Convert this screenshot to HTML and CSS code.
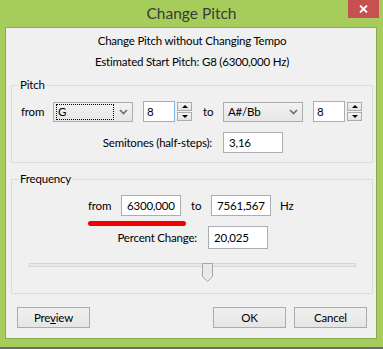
FILE: index.html
```html
<!DOCTYPE html>
<html lang="en">
<head>
<meta charset="utf-8">
<title>Change Pitch</title>
<link rel="stylesheet" href="styles.css">
</head>
<body>
<div class="window">
  <div class="titlebar">
    <h1 class="title">Change Pitch</h1>
    <div class="close"><svg width="9" height="8" viewBox="0 0 9 8"><path d="M1 0.5 L8 7.5 M8 0.5 L1 7.5" stroke="#fff" stroke-width="1.8" fill="none"/></svg></div>
  </div>
  <div class="client">
    <p class="caption">Change Pitch without Changing Tempo</p>
    <p class="caption second">Estimated Start Pitch: G8 (6300,000 Hz)</p>

    <fieldset class="group pitch">
      <legend>Pitch</legend>
      <div class="row row-notes">
        <span class="lbl lbl-from">from</span>
        <div class="combo">
          <span class="combo-val focus">G</span>
          <svg class="chev" width="9" height="6" viewBox="0 0 9 6"><path d="M1 1 L4.5 4.5 L8 1" stroke="#6d6d6d" stroke-width="1.6" fill="none"/></svg>
        </div>
        <div class="edit spin-edit active">8</div>
        <div class="spinbtns"><span class="sb up"></span><span class="sb down"></span></div>
        <span class="lbl lbl-to">to</span>
        <div class="combo">
          <span class="combo-val">A#/Bb</span>
          <svg class="chev" width="9" height="6" viewBox="0 0 9 6"><path d="M1 1 L4.5 4.5 L8 1" stroke="#6d6d6d" stroke-width="1.6" fill="none"/></svg>
        </div>
        <div class="edit spin-edit">8</div>
        <div class="spinbtns"><span class="sb up"></span><span class="sb down"></span></div>
      </div>
      <div class="row row-semi">
        <span class="rlabel semi-label">Semitones (half-steps):</span>
        <div class="edit w60">3,16</div>
      </div>
    </fieldset>

    <fieldset class="group freq">
      <legend>Frequency</legend>
      <div class="row row-freq">
        <span class="lbl lbl-ffrom">from</span>
        <div class="edit w60">6300,000</div>
        <span class="lbl lbl-fto">to</span>
        <div class="edit w60">7561,567</div>
        <span class="hz">Hz</span>
        <span class="redmark"></span>
      </div>
      <div class="row row-pct">
        <span class="rlabel pct-label">Percent Change:</span>
        <div class="edit w60 tall">20,025</div>
      </div>
      <div class="slider">
        <div class="track"></div>
        <svg class="thumb" width="11" height="19" viewBox="0 0 11 19"><path d="M0.5 0.5 H10.5 V13.5 L5.5 18.5 L0.5 13.5 Z" fill="#e9e9e9" stroke="#a5a5a5"/></svg>
      </div>
    </fieldset>

    <div class="buttons">
      <button class="btn">Pre<u>v</u>iew</button>
      <span class="spacer"></span>
      <button class="btn">OK</button>
      <button class="btn">Cancel</button>
    </div>
  </div>
</div>
</body>
</html>
```
FILE: styles.css
```css
* { box-sizing: border-box; }

body {
  margin: 0;
  width: 383px;
  height: 349px;
  overflow: hidden;
  background: #6b6b6b;
  font-family: Lato, "Liberation Sans", sans-serif;
  font-size: 11.5px;
  letter-spacing: -0.2px;
  line-height: 16px;
  color: #000;
}

.window {
  background: #a6cd5c;
  padding: 0 6px 8px 5px;
}

.titlebar {
  display: grid;
  grid-template-columns: 1fr auto 1fr;
  height: 27px;
  margin: 0 -6px 0 -5px;
  align-items: start;
}

.title {
  grid-column: 2;
  margin: 0;
  font-weight: 400;
  font-size: 15.5px;
  letter-spacing: 0;
  line-height: 27px;
  color: #3a3a3a;
}

.close {
  grid-column: 3;
  justify-self: end;
  width: 31px;
  height: 18px;
  margin-right: 4px;
  background: #c75050;
  display: flex;
  align-items: center;
  justify-content: center;
}

.client {
  background: #f0f0f0;
  border: 1px solid #89ab4c;
  height: 312px;
  padding: 5px 3px 10px 5px;
}

.caption {
  margin: 0;
  text-align: center;
}

.caption.second { margin-top: 5px; }

.group {
  margin: 0;
  padding: 0;
  border: 1px solid #dcdcdc;
  min-inline-size: 0;
}

.group legend {
  margin-left: 7px;
  padding: 0 1px;
  line-height: 16px;
}

.pitch { margin-top: 7px; padding-bottom: 9px; }
.freq { margin-top: 8px; padding-bottom: 12px; }

.row {
  display: flex;
  align-items: center;
}

.row-notes {
  margin-top: 8px;
  padding-left: 9px;
  height: 21px;
}

.lbl { flex: none; }
.lbl-from { width: 32px; }
.lbl-to { width: 31px; padding-left: 11px; }

.combo {
  flex: none;
  width: 80px;
  height: 20px;
  border: 1px solid #acacac;
  background: linear-gradient(#f2f2f2, #e6e6e6);
  display: flex;
  align-items: center;
  padding: 0 2px;
}

.combo-val {
  width: 58px;
  height: 16px;
  line-height: 14px;
  padding: 0 1px;
  border: 1px dotted transparent;
}

.combo-val.focus { border-color: #000; }

.chev { margin-left: auto; margin-right: 2px; }

.edit {
  flex: none;
  height: 21px;
  background: #fff;
  border: 1px solid #abadb3;
  padding-left: 5px;
  display: flex;
  align-items: center;
}

.spin-edit {
  width: 32px;
  margin-left: 10px;
  padding-left: 3px;
}

.edit.active { border-color: #7eb4ea; }

.spinbtns {
  flex: none;
  width: 15px;
  margin-left: 2px;
  display: flex;
  flex-direction: column;
  gap: 1px;
}

.sb {
  height: 9px;
  border: 1px solid #acacac;
  background: linear-gradient(#f4f4f4, #e2e2e2);
  display: flex;
  align-items: center;
  justify-content: center;
}

.sb::after {
  content: "";
  border-left: 3px solid transparent;
  border-right: 3px solid transparent;
}

.sb.up::after { border-bottom: 3px solid #000; }
.sb.down::after { border-top: 3px solid #000; }

.row-semi {
  margin-top: 10px;
}

.rlabel {
  flex: none;
  text-align: right;
  padding-right: 11px;
}

.semi-label { width: 211px; }

.w60 { width: 60px; }
.edit.tall { height: 23px; }

.row-freq {
  position: relative;
  margin-top: 8px;
  padding-left: 76px;
  height: 21px;
}

.lbl-ffrom { width: 33px; }
.lbl-fto { width: 30px; padding-left: 10px; }
.hz { margin-left: 9px; }

.redmark {
  position: absolute;
  left: 76px;
  top: 26px;
  width: 98px;
  height: 5px;
  border-radius: 3px;
  background: #f20000;
}

.row-pct { margin-top: 10px; }
.pct-label { width: 196px; }

.slider {
  position: relative;
  margin: 14px 16px 0 17px;
  height: 18px;
}

.track {
  margin-top: 5px;
  height: 4px;
  border: 1px solid #d6d6d6;
  background: #e7eaea;
}

.thumb {
  position: absolute;
  left: 173px;
  top: 0;
}

.buttons {
  display: flex;
  margin: 13px 6px 0 6px;
  gap: 8px;
}

.spacer { flex: 1; }

.btn {
  width: 73px;
  height: 21px;
  border: 1px solid #acacac;
  background: linear-gradient(#f0f0f0, #e5e5e5);
  font-family: inherit;
  font-size: 11.5px;
  letter-spacing: -0.2px;
  color: #000;
  padding: 0;
}
```
